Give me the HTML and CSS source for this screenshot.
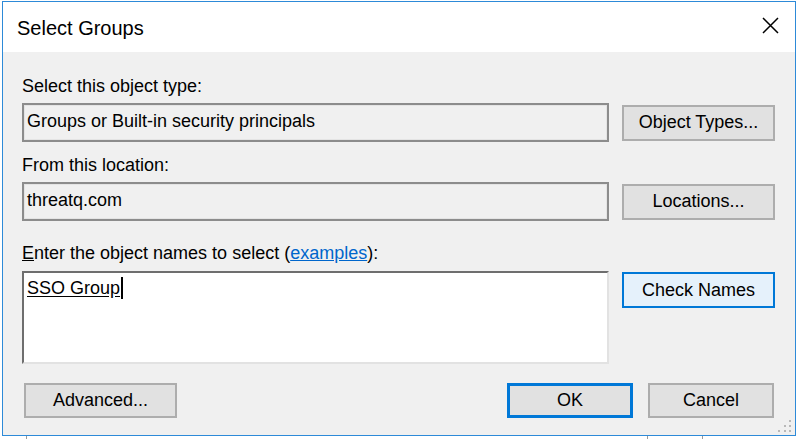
FILE: index.html
```html
<!DOCTYPE html>
<html>
<head>
<meta charset="utf-8">
<title>Select Groups</title>
<link rel="stylesheet" href="styles.css">
</head>
<body>
<div class="window">
  <div class="titlebar">
    <span class="title">Select Groups</span>
    <svg class="close" width="17" height="17" viewBox="0 0 17 17"><path d="M1 1 L16 16 M16 1 L1 16" stroke="#000" stroke-width="1.5" fill="none"/></svg>
  </div>
  <div class="content">
    <div class="label label-first">Select this object type:</div>
    <div class="row">
      <div class="field">Groups or Built-in security principals</div>
      <button class="btn">Object Types...</button>
    </div>
    <div class="label">From this location:</div>
    <div class="row">
      <div class="field">threatq.com</div>
      <button class="btn">Locations...</button>
    </div>
    <div class="label label-names"><span class="akey">E</span>nter the object names to select (<span class="link">examples</span>):</div>
    <div class="row row-top">
      <div class="names"><span class="resolved">SSO Group</span><span class="caret"></span></div>
      <button class="btn btn-focus">Check Names</button>
    </div>
    <div class="footer">
      <button class="btn btn-wide">Advanced...</button>
      <div class="spacer"></div>
      <button class="btn btn-small btn-default">OK</button>
      <button class="btn btn-small">Cancel</button>
    </div>
  </div>
  <svg class="grip" width="13" height="12" viewBox="0 0 13 12">
    <rect x="11" y="0" width="2" height="2" fill="#b8b8b8"/>
    <rect x="6" y="5" width="2" height="2" fill="#b8b8b8"/>
    <rect x="11" y="5" width="2" height="2" fill="#b8b8b8"/>
    <rect x="0" y="10" width="2" height="2" fill="#b8b8b8"/>
    <rect x="6" y="10" width="2" height="2" fill="#b8b8b8"/>
    <rect x="11" y="10" width="2" height="2" fill="#b8b8b8"/>
  </svg>
</div>
<div class="behind">
  <div class="seg seg1"></div>
  <div class="seg seg2"></div>
  <div class="seg seg3"></div>
</div>
</body>
</html>
```
FILE: styles.css
```css
html, body {
  margin: 0;
  padding: 0;
  background: #ffffff;
}
body {
  font-family: "Liberation Sans", Arial, sans-serif;
  color: #000;
  width: 800px;
  height: 439px;
  overflow: hidden;
}
.window {
  position: relative;
  box-sizing: border-box;
  width: 794px;
  height: 435px;
  margin: 1px 0 0 2px;
  border: 1px solid #2d8ad8;
  background: #f0f0f0;
}
.titlebar {
  display: flex;
  justify-content: space-between;
  align-items: flex-start;
  height: 50px;
  padding: 0 16px 0 14px;
  background: #ffffff;
}
.title {
  margin-top: 14px;
  font-size: 20px;
  line-height: 24px;
}
.close {
  margin-top: 15px;
}
.content {
  padding: 24px 20px 0 19px;
  font-size: 18px;
}
.label {
  height: 20px;
  line-height: 20px;
  margin-top: 13px;
  margin-bottom: 7px;
  white-space: nowrap;
}
.label-first {
  margin-top: 0;
}
.label-names {
  margin-top: 22px;
  margin-bottom: 8px;
}
.akey {
  text-decoration: underline;
}
.link {
  color: #0066cc;
  text-decoration: underline;
}
.row {
  display: grid;
  grid-template-columns: 1fr 153px;
  column-gap: 13px;
  align-items: center;
}
.row-top {
  align-items: start;
}
.field {
  box-sizing: border-box;
  height: 39px;
  padding: 0 3px 3px 3px;
  line-height: 32px;
  border: 2px solid #8c8c8c;
  box-shadow: inset 0 0 0 1px #e4e4e4;
  background: #f0f0f0;
  white-space: nowrap;
}
.names {
  box-sizing: border-box;
  height: 93px;
  padding: 4px 3px 0 3px;
  line-height: 20px;
  background: #ffffff;
  border-style: solid;
  border-width: 2px;
  border-color: #6e6e6e #e2e2e2 #e2e2e2 #6e6e6e;
}
.resolved {
  text-decoration: underline;
  text-underline-offset: 2px;
}
.caret {
  display: inline-block;
  width: 2px;
  height: 22px;
  margin-left: 1px;
  background: #000;
  vertical-align: -5px;
}
.btn {
  box-sizing: border-box;
  height: 36px;
  padding: 0;
  margin: 0;
  font-family: "Liberation Sans", Arial, sans-serif;
  font-size: 18px;
  color: #000;
  background: #e1e1e1;
  border: 2px solid #adadad;
  text-align: center;
}
.btn-focus {
  margin-top: 1px;
  background: #e5f1fb;
  border-color: #0078d7;
}
.footer {
  display: flex;
  align-items: center;
  gap: 15px;
  margin-top: 19px;
  padding: 0 1px 0 2px;
}
.footer .btn {
  height: 35px;
}
.btn-wide {
  width: 153px;
}
.btn-small {
  width: 126px;
}
.btn-default {
  border: 3px solid #0078d7;
}
.spacer {
  flex: 1;
}
.grip {
  position: absolute;
  right: 4px;
  bottom: 3px;
}
.behind {
  display: flex;
  height: 4px;
  padding-left: 26px;
}
.seg {
  border-left: 1px solid #9a9a9a;
}
.seg1 {
  width: 620px;
}
.seg2 {
  width: 54px;
}
.seg3 {
  width: 60px;
}
```
